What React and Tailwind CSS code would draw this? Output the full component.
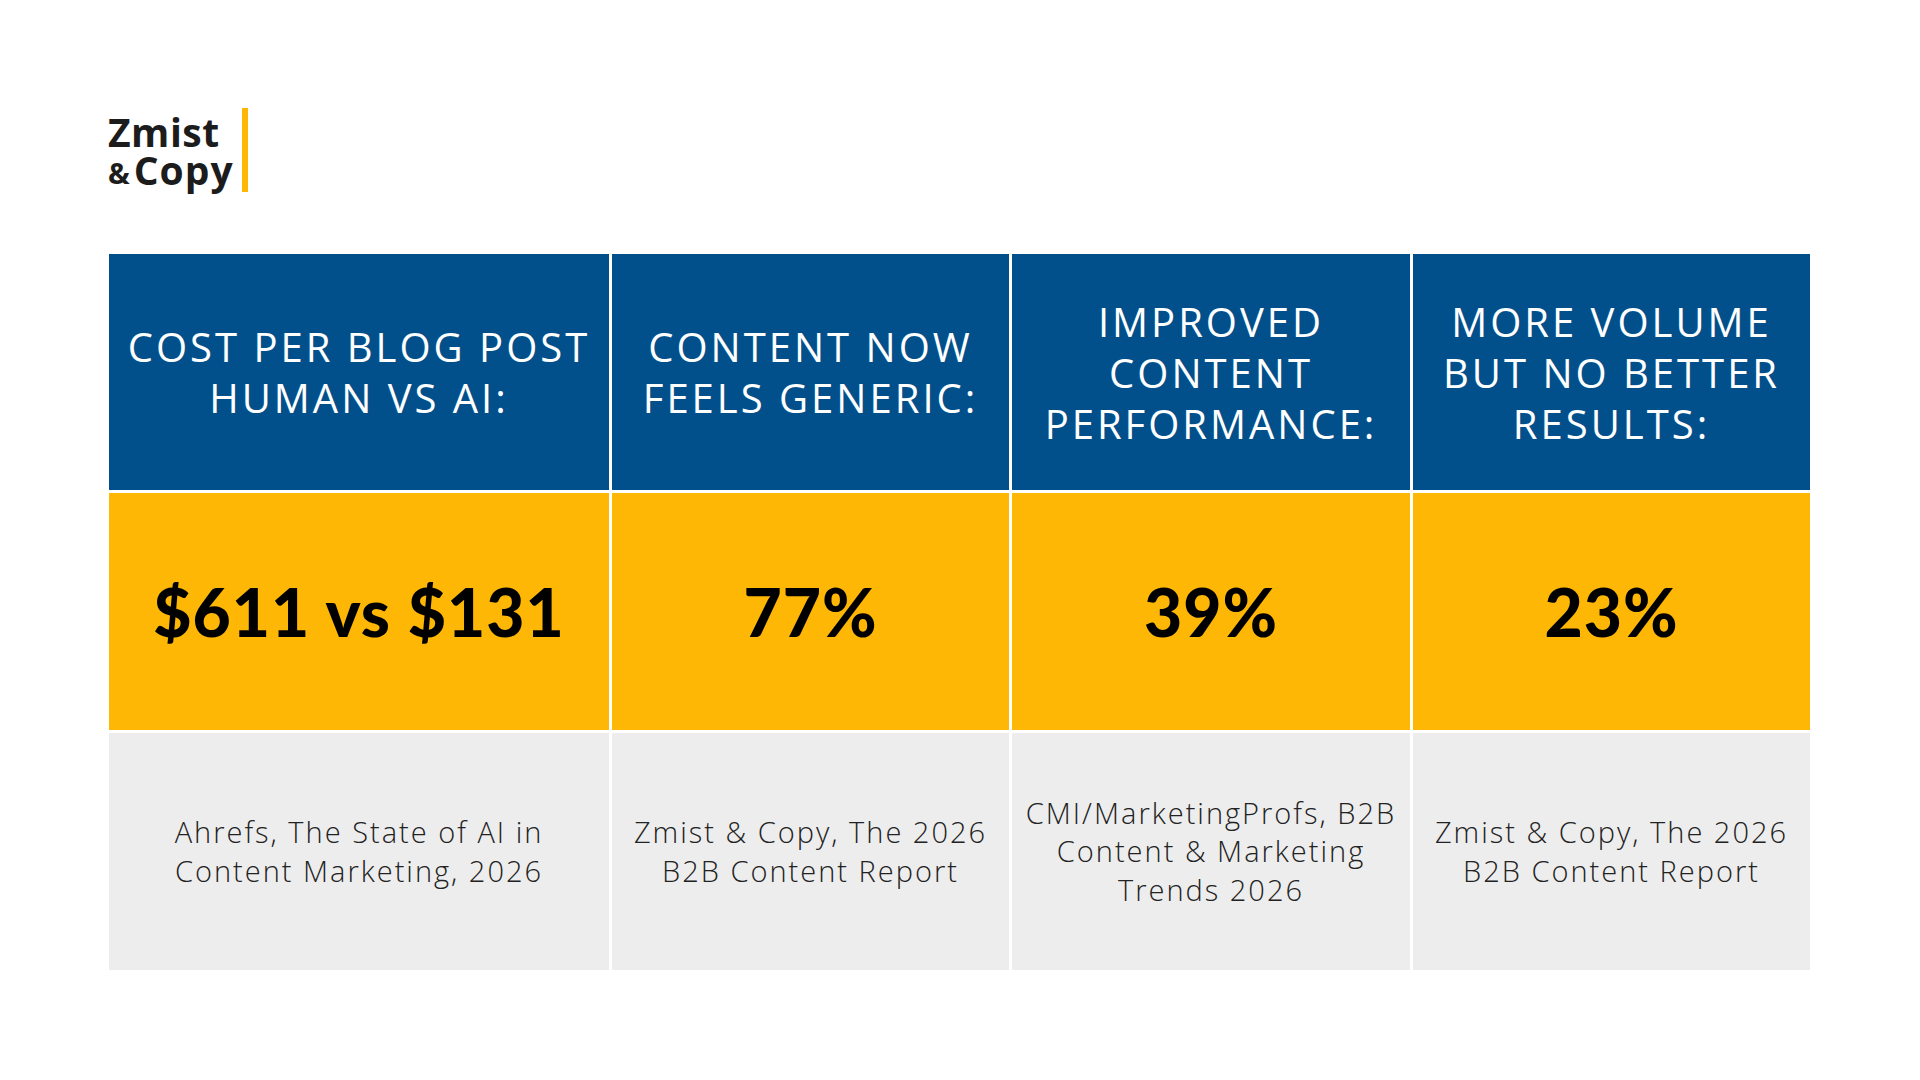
import React from "react";

const heads = [
  ["COST PER BLOG POST", "HUMAN VS AI:"],
  ["CONTENT NOW", "FEELS GENERIC:"],
  ["IMPROVED", "CONTENT", "PERFORMANCE:"],
  ["MORE VOLUME", "BUT NO BETTER", "RESULTS:"],
];

const stats = ["$611 vs $131", "77%", "39%", "23%"];

const sources = [
  ["Ahrefs, The State of AI in", "Content Marketing, 2026"],
  ["Zmist & Copy, The 2026", "B2B Content Report"],
  ["CMI/MarketingProfs, B2B", "Content & Marketing", "Trends 2026"],
  ["Zmist & Copy, The 2026", "B2B Content Report"],
];

const App = () => {
  return (
    <div className="w-[1920px] h-[1080px] bg-white flex flex-col pl-[108px] pt-[108px] font-['Lato','Open_Sans',sans-serif]">

      {/* Logo */}
      <div className="flex items-stretch h-[84px]">
        <div className="flex flex-col justify-center text-[#1c1c1c] font-bold pr-[8px] font-['Open_Sans',sans-serif]">
          <div className="h-[38px] flex items-center text-[39px] leading-none tracking-[0.5px]">Zmist</div>
          <div className="h-[38px] flex items-center text-[39px] leading-none tracking-[1px]">
            <span className="text-[29px] mr-[3px] mt-[6px]">&amp;</span>
            <span>Copy</span>
          </div>
        </div>
        <div className="w-[6px] bg-[#fdb704]" />
      </div>

      {/* Stats table */}
      <div className="mt-[62px] ml-[1px] w-[1701px] grid grid-cols-[500px_397px_398px_397px] grid-rows-[236px_237px_237px] gap-[3px] bg-white">

        {heads.map((lines, i) => (
          <div key={"h" + i} className="bg-[#02508b] flex flex-col items-center justify-center text-white text-[40px] leading-[51px] tracking-[3px] text-center font-['Open_Sans',sans-serif]">
            {lines.map((l) => (
              <span key={l}>{l}</span>
            ))}
          </div>
        ))}

        {stats.map((s, i) => (
          <div key={"s" + i} className="bg-[#fdb704] flex items-center justify-center text-black text-[66px] tracking-[1px] font-black">
            {s}
          </div>
        ))}

        {sources.map((lines, i) => (
          <div key={"c" + i} className="bg-[#ededed] flex flex-col items-center justify-center text-[#222] text-[29px] leading-[38.5px] tracking-[2px] text-center font-light font-['Open_Sans',sans-serif]">
            {lines.map((l) => (
              <span key={l}>{l}</span>
            ))}
          </div>
        ))}

      </div>

    </div>
  );
};

export default App;
